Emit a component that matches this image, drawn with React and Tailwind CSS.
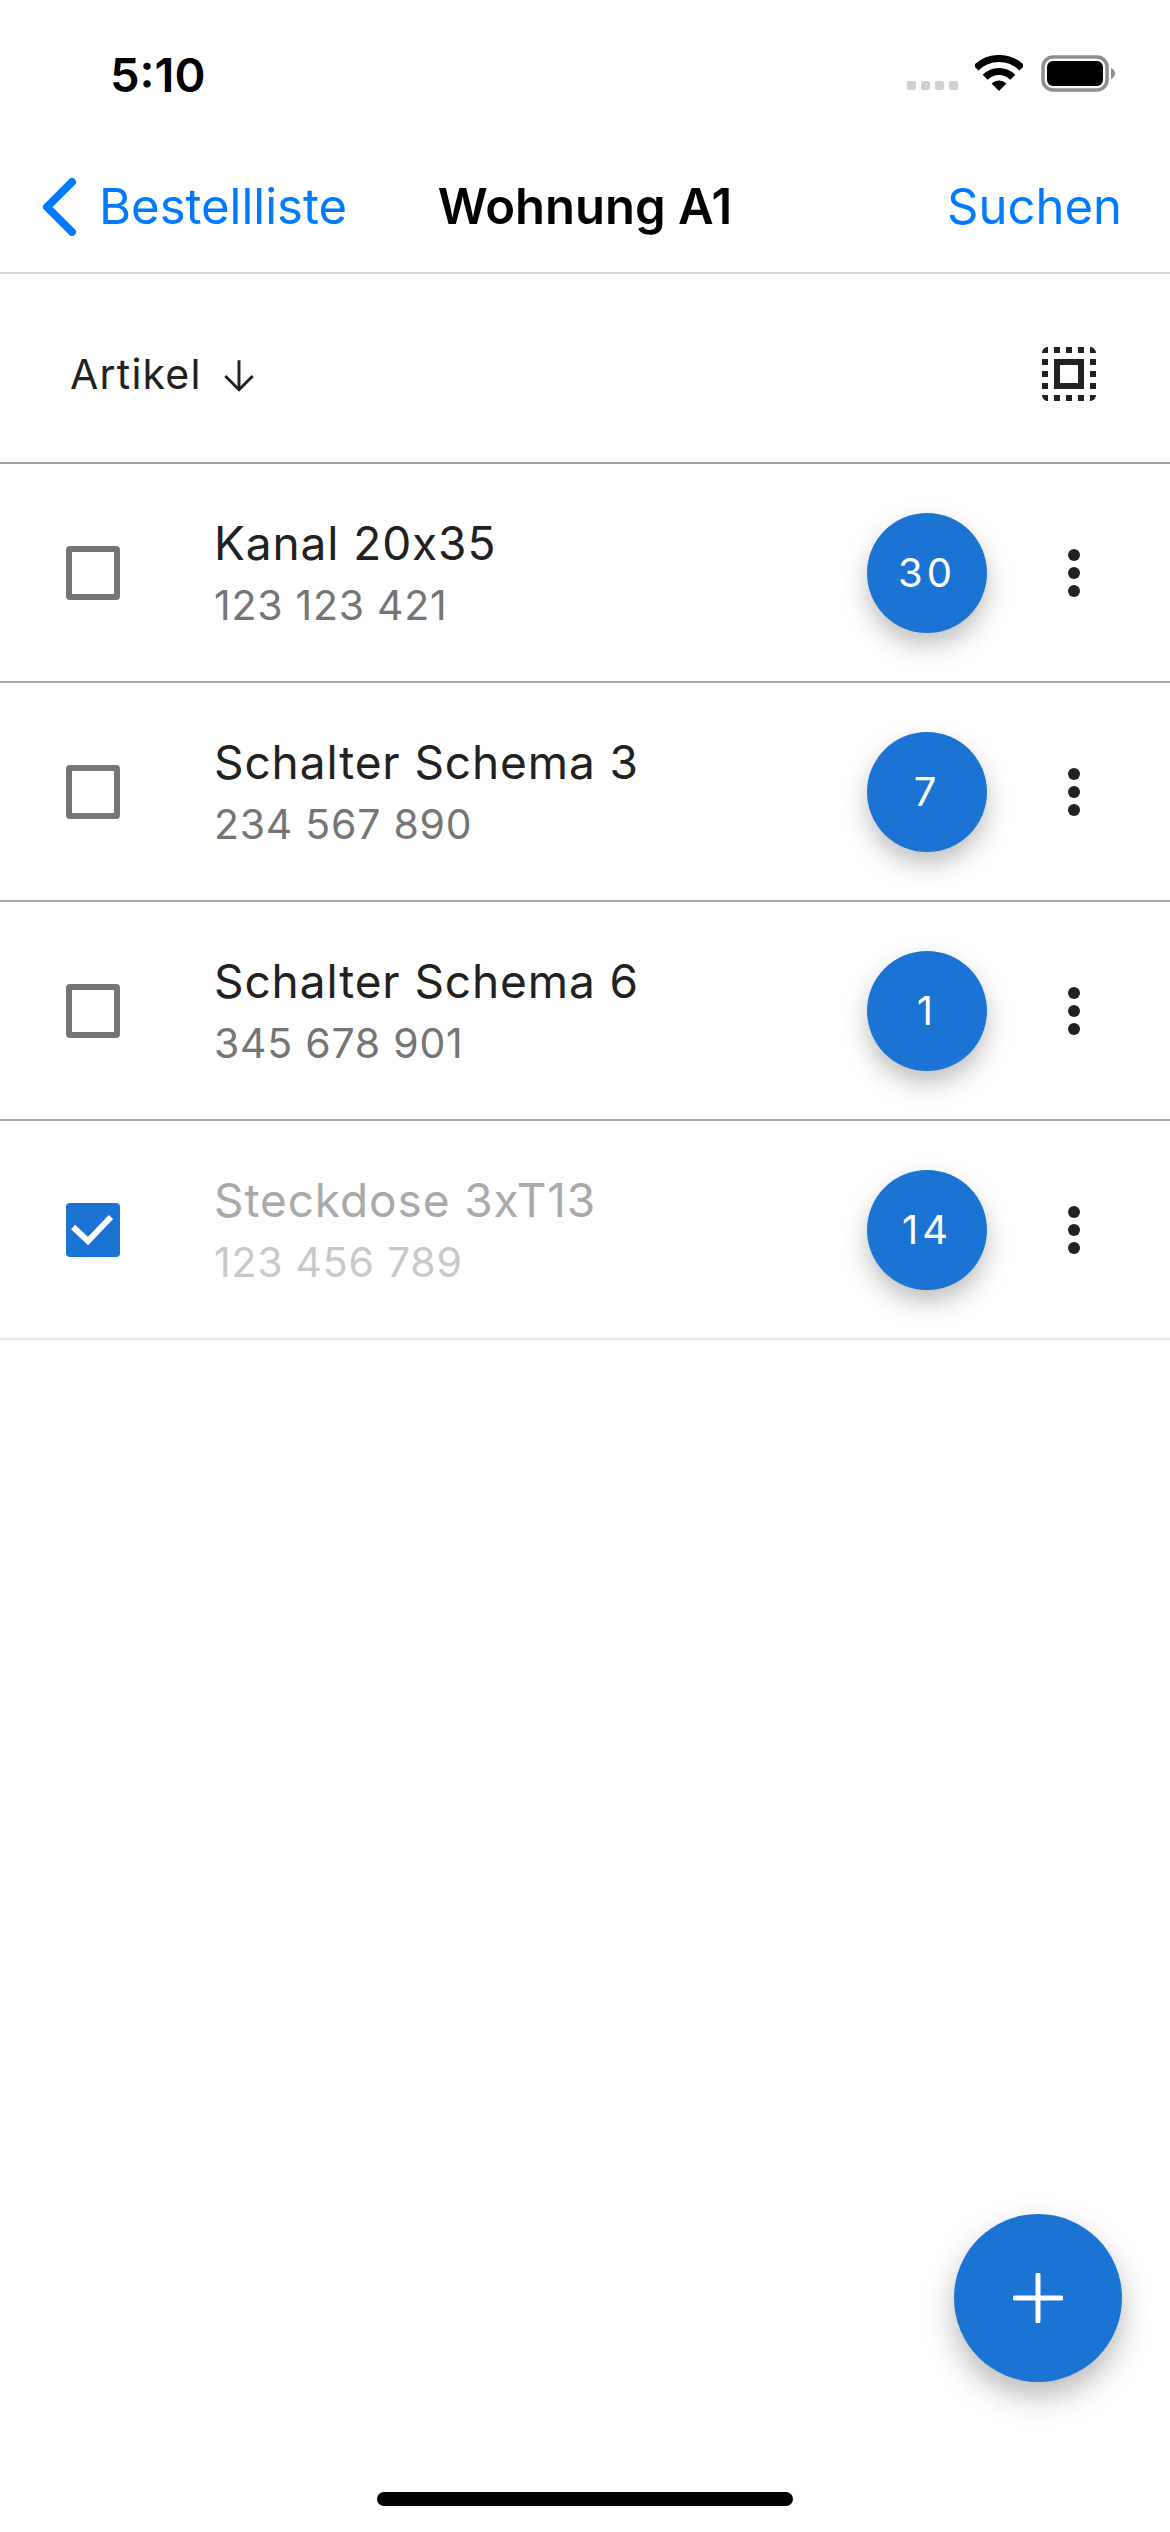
import React from 'react';

const items = [
  { name: 'Kanal 20x35', code: '123 123 421', count: '30' },
  { name: 'Schalter Schema 3', code: '234 567 890', count: '7' },
  { name: 'Schalter Schema 6', code: '345 678 901', count: '1' },
  { name: 'Steckdose 3xT13', code: '123 456 789', count: '14', done: true },
];

const StatusIcons = () => (
  <div className="flex items-end mt-[5px]">
    <div className="flex gap-[5px] mb-[3px]">
      <span className="w-[9px] h-[9px] rounded-[2px] bg-[#d0d0d0]" />
      <span className="w-[9px] h-[9px] rounded-[2px] bg-[#d0d0d0]" />
      <span className="w-[9px] h-[9px] rounded-[2px] bg-[#d0d0d0]" />
      <span className="w-[9px] h-[9px] rounded-[2px] bg-[#d0d0d0]" />
    </div>
    <svg className="ml-[17px] mb-[2px]" width="48" height="36" viewBox="0 0 48 36">
      <path d="M1 13A32.5 32.5 0 0 1 47 13" fill="none" stroke="#000" strokeWidth="7" />
      <path d="M10.2 22.2A19.5 19.5 0 0 1 37.8 22.2" fill="none" stroke="#000" strokeWidth="7" />
      <path d="M24 36L16.6 28.6A10.5 10.5 0 0 1 31.4 28.6Z" fill="#000" />
    </svg>
    <svg className="ml-[18px]" width="74" height="38" viewBox="0 0 74 38">
      <rect x="2" y="2" width="64" height="33" rx="10" fill="none" stroke="#8e8e8e" strokeWidth="3.5" />
      <rect x="6" y="6" width="56" height="25" rx="6" fill="#000" />
      <path d="M70 13c2.500 1 4 3 4 5.500s-1.500 4.500-4 5.500z" fill="#8e8e8e" />
    </svg>
  </div>
);

const Row = ({ item }) => (
  <div className={`flex items-center h-[219px] pl-[66px] border-b-2 ${item.done ? 'border-[#e4e4e4]' : 'border-[#a8a8a8]'}`}>
    {item.done ? (
      <div className="w-[54px] h-[54px] rounded-[4px] bg-[#1b74d4] flex items-center justify-center">
        <svg width="44" height="36" viewBox="0 0 44 36">
          <path d="M2 15L17 29L40 5" fill="none" stroke="#fff" strokeWidth="6" />
        </svg>
      </div>
    ) : (
      <div className="w-[54px] h-[54px] rounded-[4px] border-[6px] border-[#757575]" />
    )}
    <div className="ml-[94px] flex-1">
      <div className={`text-[46px] leading-[56px] tracking-[0.9px] ${item.done ? 'text-[#a9a9a9]' : 'text-[#212121]'}`}>{item.name}</div>
      <div className={`text-[41px] leading-[50px] mt-[9px] tracking-[0.75px] ${item.done ? 'text-[#c9c9c9]' : 'text-[#757575]'}`}>{item.code}</div>
    </div>
    <div className="w-[120px] h-[120px] rounded-full bg-[#1b74d4] shadow-[0_12px_24px_rgba(0,0,0,0.25)] flex items-center justify-center text-white text-[40px] tracking-[4px]">
      {item.count}
    </div>
    <div className="ml-[81px] mr-[90px] w-[12px] flex flex-col gap-[6px]">
      <span className="w-[12px] h-[12px] rounded-full bg-[#212121]" />
      <span className="w-[12px] h-[12px] rounded-full bg-[#212121]" />
      <span className="w-[12px] h-[12px] rounded-full bg-[#212121]" />
    </div>
  </div>
);

export default function App() {
  return (
    <div className="relative w-[1170px] h-[2532px] bg-white flex flex-col overflow-hidden font-['Inter',sans-serif]">
      {/* Status bar */}
      <div className="h-[132px] flex items-start justify-between pt-[50px] pl-[110px] pr-[55px]">
        <span className="text-[47px] leading-[50px] font-semibold text-black">5:10</span>
        <StatusIcons />
      </div>

      {/* Nav bar */}
      <div className="h-[142px] grid grid-cols-[1fr_auto_1fr] items-center border-b-2 border-[#d8d8d8] pt-[10px]">
        <div className="flex items-center pl-[41px] text-[#007aff]">
          <svg width="36" height="58" viewBox="0 0 36 58">
            <path d="M31 4L6 29L31 54" fill="none" stroke="#007aff" strokeWidth="8" strokeLinecap="round" strokeLinejoin="round" />
          </svg>
          <span className="ml-[22px] text-[49px] leading-[58px]">Bestellliste</span>
        </div>
        <span className="text-[49px] leading-[58px] font-semibold text-black">Wohnung A1</span>
        <span className="text-[49px] leading-[58px] text-[#007aff] text-right pr-[48px]">Suchen</span>
      </div>

      {/* Sort bar */}
      <div className="h-[190px] flex items-center justify-between border-b-2 border-[#a0a0a0] pl-[70px] pr-[65px] pt-[14px]">
        <div className="flex items-center text-[41px] text-[#212121] tracking-[1.2px]">
          <span>Artikel</span>
          <svg className="ml-[15px]" width="44" height="44" viewBox="0 0 24 24">
            <path d="M12 4V20M4.500 12.500L12 20L19.500 12.500" fill="none" stroke="#212121" strokeWidth="1.600" />
          </svg>
        </div>
        <svg className="-mt-[2px]" width="72" height="72" viewBox="0 0 24 24" fill="#212121">
          <path d="M3 5h2V3c-1.100 0-2 .9-2 2zm0 8h2v-2H3v2zm4 8h2v-2H7v2zM3 9h2V7H3v2zm10-6h-2v2h2V3zm6 0v2h2c0-1.100-.9-2-2-2zM5 21v-2H3c0 1.100.9 2 2 2zm-2-4h2v-2H3v2zM9 3H7v2h2V3zm2 18h2v-2h-2v2zm8-8h2v-2h-2v2zm0 8c1.100 0 2-.9 2-2h-2v2zm0-12h2V7h-2v2zm0 8h2v-2h-2v2zm-4 4h2v-2h-2v2zm0-16h2V3h-2v2zM7 17h10V7H7v10zm2-8h6v6H9V9z" />
        </svg>
      </div>

      {/* List */}
      <div className="flex flex-col">
        {items.map((item) => (
          <Row key={item.name} item={item} />
        ))}
      </div>

      {/* Add button */}
      <div className="absolute left-[954px] top-[2214px] w-[168px] h-[168px] rounded-full bg-[#1b74d4] shadow-[0_14px_30px_rgba(0,0,0,0.28)] flex items-center justify-center">
        <svg width="50" height="50" viewBox="0 0 50 50">
          <path d="M25 2V48M2 25H48" fill="none" stroke="#fff" strokeWidth="5" strokeLinecap="round" />
        </svg>
      </div>

      {/* Home indicator */}
      <div className="mt-auto mb-[26px] mx-auto w-[416px] h-[14px] rounded-full bg-black" />
    </div>
  );
}
